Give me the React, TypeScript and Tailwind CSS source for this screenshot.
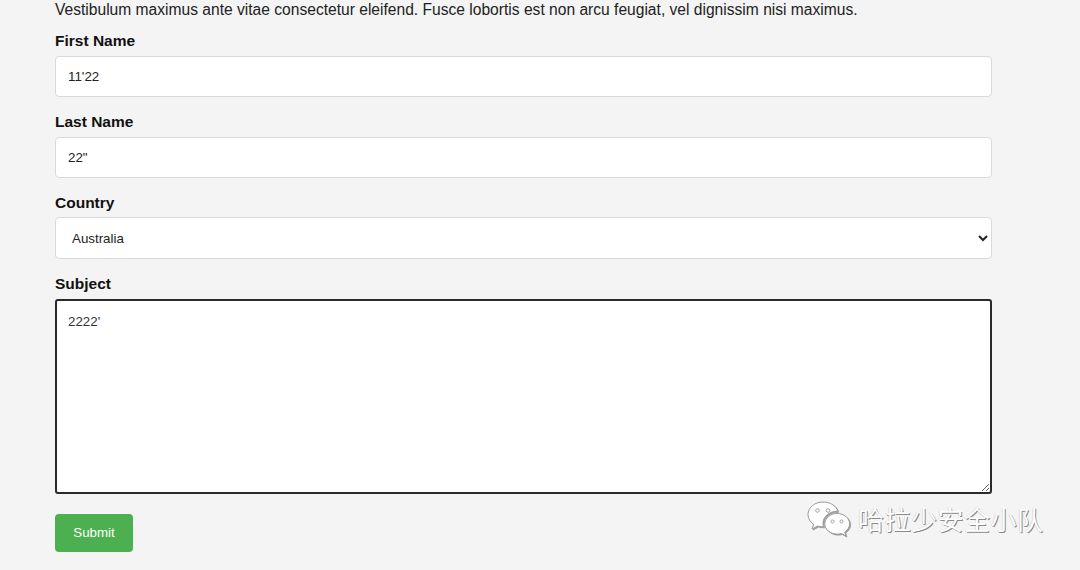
import React from 'react';

const WeChatMark = () => (
  <svg width="46" height="38" viewBox="0 0 46 38" className="drop-shadow-[1px_1px_0_rgba(0,0,0,0.35)]">
    <path
      d="M17 2C8.7 2 2 7.6 2 14.5c0 4 2.2 7.5 5.7 9.8L6 29l5.6-3c1.7.5 3.5.8 5.4.8h.6c-.4-1.1-.6-2.3-.6-3.5 0-6.6 6.3-12 14.2-12h.5C30.4 5.8 24.3 2 17 2z"
      fill="#fff"
      stroke="#9a9a9a"
      strokeWidth="1"
    />
    <circle cx="11.5" cy="10.5" r="1.8" fill="#fff" stroke="#9a9a9a" strokeWidth="0.9" />
    <circle cx="22" cy="10.5" r="1.8" fill="#fff" stroke="#9a9a9a" strokeWidth="0.9" />
    <path
      d="M31.2 13.5c-6.8 0-12.4 4.6-12.4 10.3s5.6 10.3 12.4 10.3c1.5 0 2.9-.2 4.2-.6l4.6 2.5-1.3-4c3-1.9 4.9-4.9 4.9-8.2 0-5.7-5.6-10.3-12.4-10.3z"
      fill="#fff"
      stroke="#9a9a9a"
      strokeWidth="1"
    />
    <circle cx="26.5" cy="21.5" r="1.5" fill="#fff" stroke="#9a9a9a" strokeWidth="0.9" />
    <circle cx="35.5" cy="21.5" r="1.5" fill="#fff" stroke="#9a9a9a" strokeWidth="0.9" />
  </svg>
);

export default function App() {
  return (
    <div className="relative min-h-[570px] w-[1080px] overflow-hidden bg-[#f4f4f4] font-['Liberation_Sans',Arial,sans-serif] text-[#222]">
      <div className="px-[55px]">
        <p className="mt-[1px] mb-[13px] text-[15.6px] leading-[normal] text-[#222]">
          Vestibulum maximus ante vitae consectetur eleifend. Fusce lobortis est non arcu feugiat, vel dignissim nisi maximus.
        </p>

        <form className="w-[937px]" onSubmit={(e) => e.preventDefault()}>
          <label className="block text-[15.5px] font-bold leading-[18px] text-[#111]">First Name</label>
          <input
            type="text"
            defaultValue="11'22"
            className="mt-[6px] mb-[16px] block h-[41px] w-full rounded-[4px] border border-[#d9d9d9] bg-white px-[12px] text-[13.33px] text-[#222] outline-none"
          />

          <label className="block text-[15.5px] font-bold leading-[18px] text-[#111]">Last Name</label>
          <input
            type="text"
            defaultValue={'22"'}
            className="mt-[6px] mb-[16px] block h-[41px] w-full rounded-[4px] border border-[#d9d9d9] bg-white px-[12px] text-[13.33px] text-[#222] outline-none"
          />

          <label className="block text-[15.5px] font-bold leading-[18px] text-[#111]">Country</label>
          <select
            defaultValue="australia"
            className="mt-[5px] mb-[16px] block h-[42px] w-full rounded-[4px] border border-[#d9d9d9] bg-white px-[12px] text-[13.33px] text-[#222] outline-none"
          >
            <option value="australia">Australia</option>
            <option value="canada">Canada</option>
            <option value="usa">USA</option>
          </select>

          <label className="block text-[15.5px] font-bold leading-[18px] text-[#111]">Subject</label>
          <textarea
            defaultValue="2222'"
            className="mt-[6px] block h-[195px] w-full rounded-[3px] border-2 border-[#2a2a2a] bg-white px-[11px] py-[11px] text-[13.33px] text-[#333] outline-none"
          />

          <button
            type="submit"
            className="mt-[20px] h-[38px] w-[78px] rounded-[4px] bg-[#4caf50] text-[13.33px] text-white"
          >
            Submit
          </button>
        </form>
      </div>

      <div className="absolute left-[806px] top-[500px] flex items-center gap-[6px]">
        <WeChatMark />
        <span className="font-['Noto_Sans_CJK_SC',sans-serif] text-[26px] leading-none tracking-[0.5px] text-white [text-shadow:1px_1px_0_#8a8a8a,-0.5px_-0.5px_0_#c8c8c8]">
          哈拉少安全小队
        </span>
      </div>
    </div>
  );
}
